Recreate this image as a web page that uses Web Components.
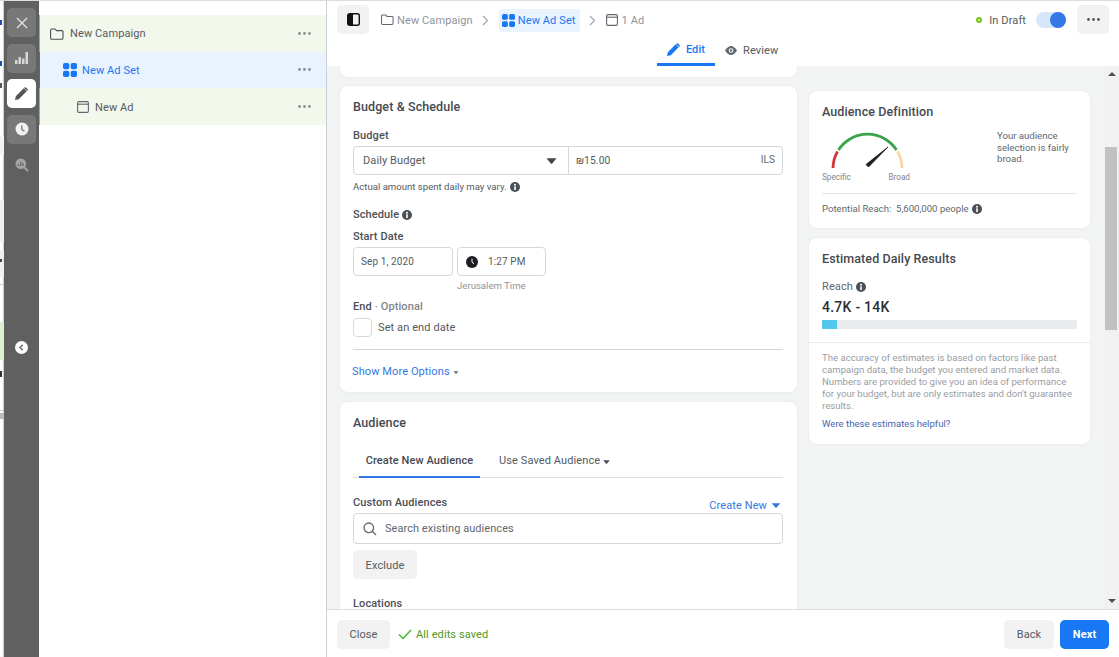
<!DOCTYPE html>
<html><head><meta charset="utf-8"><title>Ad Set</title>
<style>
html,body{margin:0;height:100%;overflow:hidden;background:#fff}
body{font-family:Roboto,"Liberation Sans",sans-serif;font-size:11px;color:#555a60;letter-spacing:.1px}
ads-app{height:657px}
</style></head><body>
<ads-app></ads-app>
<script>
const I={
 folder:(c='#4b4f56',s=14)=>`<svg width="${s}" height="${s*12/14}" viewBox="0 0 14 12" fill="none" stroke="${c}" stroke-width="1.1"><path d="M1.5 1h3.6l1.4 1.6h5.4q1.1 0 1.1 1V10q0 1.300-1.100 1.300H1.600Q.6 11.300.6 10V2Q.6 1 1.500 1z"/></svg>`,
 grid:(s=14)=>`<svg width="${s}" height="${s}" viewBox="0 0 14 14" fill="#1877f2"><rect x="0" y="0" width="6.300" height="6.300" rx="1.800"/><rect x="7.700" y="0" width="6.300" height="6.300" rx="1.800"/><rect x="0" y="7.700" width="6.300" height="6.300" rx="1.800"/><rect x="7.700" y="7.700" width="6.300" height="6.300" rx="1.800"/></svg>`,
 ad:(c='#606770')=>`<svg width="12" height="12" viewBox="0 0 12 12" fill="none" stroke="${c}" stroke-width="1.100"><rect x=".6" y=".6" width="10.800" height="10.800" rx="1.400"/><path d="M.6 3.200h10.800"/></svg>`,
 info:(c='#4b4f56',s=10)=>`<svg width="${s}" height="${s}" viewBox="0 0 10 10"><circle cx="5" cy="5" r="5" fill="${c}"/><rect x="4.200" y="4.300" width="1.600" height="3.700" fill="#fff"/><circle cx="5" cy="2.700" r="1" fill="#fff"/></svg>`,
 caret:(c='#4b4f56',w=11,h=6)=>`<svg width="${w}" height="${h}" viewBox="0 0 10 6"><path d="M0 .3h10L5.500 5.700q-.5.300-1 0z" fill="${c}"/></svg>`,
 chev:`<svg width="7" height="11" viewBox="0 0 7 11" fill="none" stroke="#a5a8ad" stroke-width="1.300"><path d="M1 1l4.500 4.500L1 10"/></svg>`,
 dots:`<svg width="13" height="3" viewBox="0 0 13 3" fill="#8d9095"><circle cx="1.500" cy="1.500" r="1.400"/><circle cx="6.500" cy="1.500" r="1.400"/><circle cx="11.500" cy="1.500" r="1.400"/></svg>`,
 pencil:(c)=>`<svg width="13" height="13" viewBox="0 0 13 13" fill="${c}"><path d="M0 13l.8-3.800L8.700 1.300l3 3L3.800 12.200zM9.500.5q.7-.6 1.400 0l1.600 1.600q.6.7 0 1.400l-.4.400-3-3z"/></svg>`
};
function def(name,html,css){
 customElements.define(name,class extends HTMLElement{
  connectedCallback(){
   if(this.shadowRoot)return;
   const r=this.attachShadow({mode:'open'});
   r.innerHTML=`<style>${css}</style>${html}`;
  }
 });
}
const sp=(h,c='transparent')=>`<div style="height:${h}px;background:${c}"></div>`;
const mark=(h,c)=>`<div style="height:${h}px;width:2px;background:${c}"></div>`;
def('page-sliver',sp(19)+mark(5,'#1c4fb0')+sp(36)+mark(5,'#1c4fb0')+sp(17)+mark(5,'#555')+sp(48)+sp(19,'#f2f2f2')+sp(45)+sp(42,'#f0f0f0')+sp(8)+`<div style="height:9px;background:#f0f0f0"></div>`+mark(3,'#444')+sp(15,'#f0f0f0')+sp(7)+sp(1,'#ccc')+sp(37)+sp(38,'#dcefd0')+sp(11)+mark(6,'#333')+sp(33)+sp(1,'#ccc')+sp(2)+sp(6,'#bbb'),
`:host{display:block;width:4px;flex:none;overflow:hidden;background:#fff;box-shadow:inset -1px 0 1px #ccc}`);

def('rail-button',`<slot></slot>`,`:host{display:flex;align-items:center;justify-content:center;width:29px;height:29px;border-radius:5px;background:#787878;color:#ddd}
:host([active]){background:#fff}:host([plain]){background:none}`);

def('side-rail',`<div class="stack">
<rail-button><svg width="12" height="12" viewBox="0 0 12 12" stroke="#e4e4e4" stroke-width="1.300"><path d="M1 1l10 10M11 1L1 11"/></svg></rail-button>
<rail-button><svg width="13" height="12" viewBox="0 0 13 12" fill="#d6d6d6"><rect x="0" y="8" width="2.500" height="4"/><rect x="3.500" y="5" width="2.500" height="7"/><rect x="7" y="6.500" width="2.500" height="5.500"/><rect x="10.500" y="0" width="2.500" height="12"/></svg></rail-button>
<rail-button active>${I.pencil('#555')}</rail-button>
<rail-button><svg width="14" height="14" viewBox="0 0 14 14"><circle cx="7" cy="7" r="6.500" fill="#f2f2f2"/><path d="M6.800 3.500v4l2.600 1.600" fill="none" stroke="#777" stroke-width="1.300"/></svg></rail-button>
<rail-button plain><svg width="14" height="14" viewBox="0 0 14 14"><circle cx="5.800" cy="5.800" r="5.300" fill="#a5a5a5"/><path d="M9.500 9.500L13 13" stroke="#a5a5a5" stroke-width="2"/><path d="M3.500 8V6M5.800 8V3.800M8 8V5" stroke="#666" stroke-width="1.200"/></svg></rail-button>
</div><div class="back"><svg width="13" height="13" viewBox="0 0 13 13"><circle cx="6.500" cy="6.500" r="6.500" fill="#fff"/><path d="M7.800 3.800L5 6.500l2.800 2.700" fill="none" stroke="#777" stroke-width="1.600"/></svg></div>`,
`:host{display:block;width:35px;flex:none;background:#606060;padding-top:7px;box-sizing:border-box}
.stack{display:flex;flex-direction:column;align-items:center;gap:6.500px}
.back{display:flex;justify-content:center;margin-top:162px}`);

def('tree-row',`<slot name="icon"></slot><span class="n"><slot></slot></span>${I.dots}`,
`:host{display:flex;align-items:center;height:37px;box-sizing:border-box;border-left:1px solid #8bc34a;background:#f3f8ec;padding:0 15px 0 calc(10px + var(--ind,0px))}
:host([sel]){height:36px;background:#e9f3fe;border-left-color:#1877f2;color:#1877f2}
:host([low]){padding-top:1px}
.n{flex:1;margin-left:var(--g,6px)}svg{margin-bottom:1px}`);

def('tree-panel',`<tree-row><span slot="icon">${I.folder('#4b4f56')}</span>New Campaign</tree-row>
<tree-row sel style="--ind:13px;--g:5px"><span slot="icon">${I.grid()}</span>New Ad Set</tree-row>
<tree-row low style="--ind:27px;--g:6px"><span slot="icon">${I.ad()}</span>New Ad</tree-row>`,
`:host{display:block;width:288px;flex:none;box-sizing:border-box;border-right:1px solid #ccd0d5;padding-top:14px;background:#fff}span{display:flex}`);

def('gray-btn',`<slot></slot>`,`:host{display:inline-flex;align-items:center;justify-content:center;height:29px;border-radius:5px;background:#f2f2f2;box-sizing:border-box;flex:none}
:host([primary]){background:#1877f2;color:#fff;font-weight:700}
:host([drop]){padding-top:1px}`);

def('top-bar',`<div class="r1">
<gray-btn style="width:32px"><svg width="13" height="13" viewBox="0 0 13 13"><rect x=".7" y=".7" width="11.600" height="11.600" rx="2" fill="none" stroke="#111" stroke-width="1.400"/><rect x="1" y="1" width="5" height="11" fill="#111"/></svg></gray-btn>
<div class="crumb" style="margin-left:12px">${I.folder('#606770',13)}<span>New Campaign</span></div>
<div class="c">${I.chev}</div>
<div class="crumb on">${I.grid(13)}<span>New Ad Set</span></div>
<div class="c">${I.chev}</div>
<div class="crumb" style="gap:4px">${I.ad()}<span>1 Ad</span></div>
<div class="sp"></div>
<span class="dot"></span><span class="dr">In Draft</span>
<span class="tog"><i></i></span>
<gray-btn style="width:32px">${I.dots.replace('#8d9095','#555')}</gray-btn>
</div>
<div class="tabs"><div class="tab on">${I.pencil('#1877f2')}<span>Edit</span></div>
<div class="tab"><svg width="12" height="9" viewBox="0 0 12 9"><path d="M0 4.500Q3 0 6 0t6 4.500Q9 9 6 9T0 4.500z" fill="#606770"/><circle cx="6" cy="4.500" r="2.300" fill="#fff"/><circle cx="6" cy="4.500" r="1.200" fill="#606770"/></svg><span>Review</span></div></div>`,
`:host{display:block;flex:none;height:65px;background:#fff;box-sizing:border-box;padding-top:4px}
.r1{display:flex;align-items:center;padding:0 10px;height:29px}
.crumb{display:flex;align-items:center;gap:3px;color:#90949c;height:23px;margin-top:1px}
.crumb span{padding-top:1px}
.crumb.on{background:#e9f3fe;color:#1877f2;border-radius:3px;padding:0 4px 0 3px;gap:3px}
.c{width:26px;display:flex;justify-content:center;margin-top:1px}
.sp{flex:1}.dot{width:6px;height:6px;border-radius:50%;border:2px solid #7ac61f;box-sizing:border-box;background:#e4f2cf;margin-top:1px}
.dr{margin:1px 10px 0 7px}
.tog{width:30px;height:16px;border-radius:8px;background:#d8e6fb;display:flex;justify-content:flex-end;margin-right:11px}
.tog i{width:16px;height:16px;border-radius:50%;background:#3578e5}
.tabs{display:flex;justify-content:center;gap:10px;margin-top:2px;height:30px;padding-right:10px}
.tab{display:flex;align-items:center;gap:6px;padding:1px 0 2px;box-sizing:border-box;height:30px}
.tab.on{width:58px;justify-content:center;color:#1877f2;font-weight:500;border-bottom:3px solid #1877f2}
.tab:last-child{width:54px}`);

def('a-card',`<slot></slot>`,`:host{display:block;background:#fff;border-radius:8px;box-shadow:0 0 2px rgba(0,0,0,.08);box-sizing:border-box;padding:13px 14px 13px 13px;flex:none}`);

const sty=`*{box-sizing:border-box}.t{font-size:12.500px;font-weight:500;color:#444950;line-height:16px}
.lab{font-weight:500;color:#4b4f56;line-height:14px}.box{border:1px solid #d5d7da;border-radius:4px;display:flex;align-items:center;background:#fff}`;

def('budget-card',`<a-card style="height:306px">
<div class="t">Budget &amp; Schedule</div>
<div class="lab" style="margin-top:14px">Budget</div>
<div class="box" style="margin-top:3px;height:29px">
 <div class="sel"><span>Daily Budget</span>${I.caret('#444')}</div>
 <div class="amt"><span class="v">₪15.00</span><span class="ils">ILS</span></div>
</div>
<div class="note" style="margin-top:5px"><span>Actual amount spent daily may vary.</span> ${I.info()}</div>
<div class="lab row" style="margin-top:14px">Schedule ${I.info()}</div>
<div class="lab" style="margin-top:8px">Start Date</div>
<div class="dates"><div class="box d1">Sep 1, 2020</div><div class="box d2"><svg width="12" height="12" viewBox="0 0 12 12"><circle cx="6" cy="6" r="6" fill="#1c1e21"/><path d="M6 2.800v3.400l2 1.600" fill="none" stroke="#fff" stroke-width="1"/></svg><span>1:27 PM</span></div></div>
<div class="tz">Jerusalem Time</div>
<div class="lab" style="margin-top:7px"><span>End</span><span class="opt"> · Optional</span></div>
<div class="cbrow"><div class="box cb"></div><span>Set an end date</span></div>
<div class="hr"></div>
<div class="more"><span>Show More Options</span>${I.caret('#606770',6,3)}</div>
</a-card>`,sty+`:host{display:block;flex:none}
.sel{width:215px;height:100%;display:flex;align-items:center;justify-content:space-between;padding:0 11px 0 9px;border-right:1px solid #d5d7da}
.amt{flex:1;display:flex;justify-content:space-between;padding:0 7px 0 7px}.v{font-size:10.300px}.ils{font-size:10px;color:#606770}
.note{font-size:9.600px;letter-spacing:0;display:flex;align-items:center;gap:4px;line-height:14px}
.row{display:flex;align-items:center;gap:3px}
.dates{display:flex;gap:4px;margin-top:3px}.d1{width:100px;height:29px;padding-left:7px;font-size:10px;letter-spacing:.1px}.d2{width:89px;height:29px;padding-left:8px;gap:10px;font-size:10px}
.tz{margin-left:104px;color:#90949c;font-size:9.600px;letter-spacing:0;line-height:14px;margin-top:3px}
.opt{color:#80858c}
.cbrow{display:flex;align-items:center;gap:6px;margin-top:4px}.cb{width:19px;height:19px}
.hr{height:1px;background:#d5d7da;margin-top:12px}
.more{color:#3578e5;margin-top:15px;line-height:14px;display:flex;align-items:center;gap:3px;margin-left:-1px}`);

def('audience-card',`<a-card style="height:300px">
<div class="t">Audience</div>
<div class="tabs"><div class="tb on">Create New Audience</div><div class="tb">Use Saved Audience ${I.caret('#4b4f56',7,4)}</div></div>
<div class="ca"><span class="lab">Custom Audiences</span><span class="cn">Create New ${I.caret('#3578e5',10,5)}</span></div>
<div class="box srch"><svg width="14" height="14" viewBox="0 0 14 14" fill="none" stroke="#606770" stroke-width="1.300"><circle cx="5.800" cy="5.800" r="4.800"/><path d="M9.300 9.300L13 13"/></svg><span>Search existing audiences</span></div>
<gray-btn drop style="width:64px;margin-top:6px">Exclude</gray-btn>
<div class="lab" style="margin-top:18px">Locations</div>
</a-card>`,sty+`:host{display:block;flex:none}
.tabs{display:flex;height:31px;margin-top:16px;border-bottom:1px solid #dddfe2;padding-left:6px;gap:0}
.tb{padding:0;width:121px;text-align:center;height:31px;line-height:28px;white-space:nowrap}
.tb.on{font-weight:500;color:#444950;border-bottom:2px solid #3578e5}.tb+.tb{margin-left:19px;width:auto;text-align:left}
.ca{display:flex;justify-content:space-between;margin-top:18px;height:17px}.cn{color:#3578e5;margin:2px 2px 0 0;display:flex;align-items:center;gap:4px;height:14px}
.lab{display:block}
.srch{height:31px;padding-left:9px;gap:8px;color:#606770;letter-spacing:.05px}`);

def('definition-card',`<a-card style="height:137px;padding:13px">
<div class="t">Audience Definition</div>
<div class="mid"><div class="g">
<svg width="75" height="40" viewBox="0 0 75 40" fill="none"><path d="M3 38A34.500 34.500 0 0 1 7.500 21.500" stroke="#d13a3a" stroke-width="2.800"/><path d="M8.500 20A34.500 34.500 0 0 1 66.500 20" stroke="#3aa34a" stroke-width="2.800"/><path d="M67.500 21.500A34.500 34.500 0 0 1 72 38" stroke="#fbd5a5" stroke-width="2.800"/><path d="M38.500 37L36 34.500L58 17z" fill="#1c1e21" stroke="#1c1e21" stroke-width=".8" stroke-linejoin="round"/></svg>
<div class="ends"><span>Specific</span><span>Broad</span></div></div>
<div class="say">Your audience selection is fairly broad.</div></div>
<div class="hr"></div>
<div class="pr"><span>Potential Reach:&nbsp; 5,600,000 people</span>${I.info()}</div>
</a-card>`,sty+`:host{display:block;flex:none}
.mid{display:flex;justify-content:space-between;margin-top:7px}.g{width:88px;height:52px;margin-top:3px}
svg{display:block}.g svg{margin-left:8px}
.ends{display:flex;justify-content:space-between;font-size:8.200px;letter-spacing:0;color:#80858c;line-height:10px;margin-top:2px;width:88px}
.say{width:80px;font-size:9.600px;letter-spacing:0;line-height:11.700px;color:#606770;padding-top:3px}
.hr{height:1px;background:#e4e6e9;margin-top:11px}
.pr{display:flex;align-items:center;gap:3px;margin-top:9px;font-size:9.600px;letter-spacing:0;color:#606770;line-height:12px}`);

def('results-card',`<a-card style="height:206px;padding:0">
<div class="top"><div class="t">Estimated Daily Results</div>
<div class="rc">Reach ${I.info()}</div>
<div class="num">4.7K - 14K</div>
<div class="bar"><i></i></div></div>
<div class="low"><p>The accuracy of estimates is based on factors like past campaign data, the budget you entered and market data. Numbers are provided to give you an idea of performance for your budget, but are only estimates and don't guarantee results.</p>
<div class="lnk">Were these estimates helpful?</div></div>
</a-card>`,sty+`:host{display:block;flex:none}
.top{padding:13px 13px 13px;border-bottom:1px solid #e9ebee;height:105px}
.rc{display:flex;align-items:center;gap:3px;margin-top:13px;line-height:14px;color:#606770}
.num{font-size:14px;font-weight:500;color:#2b2f36;margin-top:4px;line-height:18px;letter-spacing:.25px}
.bar{height:9px;background:#e9ebee;margin-top:4px}.bar i{display:block;width:15px;height:9px;background:#54c7ec}
.low{padding:9px 13px}
p{margin:0;font-size:9.600px;letter-spacing:0;line-height:12px;color:#9a9da3}
.lnk{margin-top:6px;font-size:9.600px;letter-spacing:0;line-height:12px;color:#4267b2}`);

def('fake-scrollbar',`<div class="ar up"></div><div class="track"><div class="th"></div></div><div class="ar dn"></div>`,
`:host{display:flex;flex-direction:column;align-items:center;width:15px;flex:none;background:#f1f1f1;padding-top:6px;padding-bottom:6px;box-sizing:border-box}
.ar{width:0;height:0;border-left:4px solid transparent;border-right:4px solid transparent}
.up{border-bottom:4px solid #505050}.dn{border-top:4px solid #505050}
.track{flex:1;width:100%;padding:71px 2px 0 1px;box-sizing:border-box}.th{height:183px;background:#c1c1c1}`);

def('scroll-area',`<div class="inner"><div class="left">
<a-card style="height:11px;padding:0;border-radius:0 0 8px 8px"></a-card>
<budget-card style="margin-top:-1px"></budget-card><audience-card></audience-card></div>
<div class="right"><definition-card></definition-card><results-card></results-card></div></div>
<fake-scrollbar></fake-scrollbar>`,
`:host{display:flex;flex:1;min-height:0;background:#f2f3f3;overflow:hidden}
.inner{flex:1;display:flex;overflow:hidden;padding-left:13px;gap:12px}
.left{width:457px;flex:none;display:flex;flex-direction:column;gap:10px}
.right{width:281px;flex:none;display:flex;flex-direction:column;gap:10px;padding-top:25px}`);

def('bottom-bar',`<gray-btn style="width:53px">Close</gray-btn>
<svg class="ck" width="14" height="11" viewBox="0 0 14 11" fill="none" stroke="#42b72a" stroke-width="1.500"><path d="M1 5.500l4 4L13 1"/></svg>
<span class="sv">All edits saved</span><span class="sp"></span>
<gray-btn style="width:50px">Back</gray-btn><gray-btn primary style="width:49px;margin-left:6px">Next</gray-btn>`,
`:host{display:flex;align-items:center;flex:none;height:48px;box-sizing:border-box;border-top:1px solid #dadde1;background:#fff;padding:1px 10px 0}
.ck{margin-left:8px}.sv{color:#4d9a1f;margin-left:4px}.sp{flex:1}`);

def('main-pane',`<top-bar></top-bar><scroll-area></scroll-area><bottom-bar></bottom-bar>`,
`:host{display:flex;flex-direction:column;flex:1;min-width:0;height:100%}`);

def('ads-app',`<div class="line"></div><div class="rest"><page-sliver></page-sliver><side-rail></side-rail><tree-panel></tree-panel><main-pane></main-pane></div>`,
`:host{display:flex;flex-direction:column;height:657px}
.line{height:1px;background:#ddd;flex:none}.rest{display:flex;flex:1;min-height:0}`);
</script></body></html>
